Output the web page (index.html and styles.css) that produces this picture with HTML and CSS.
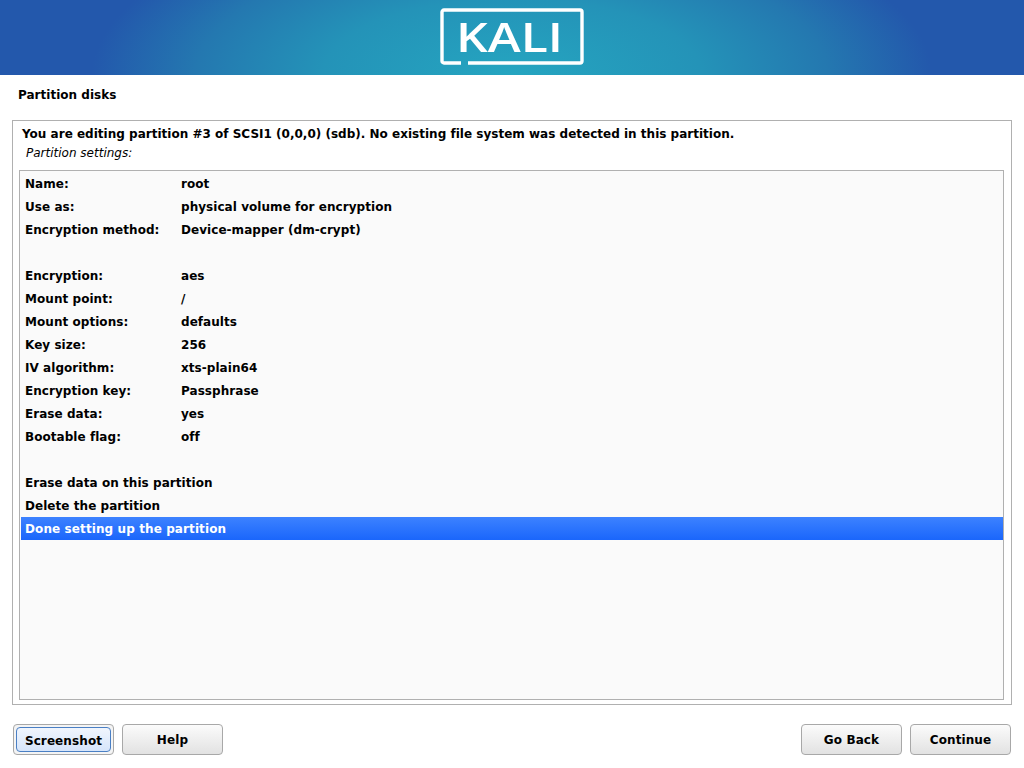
FILE: index.html
```html
<!DOCTYPE html>
<html lang="en">
  <head>
    <meta charset="UTF-8" />
    <title>Partition disks</title>
    <link rel="stylesheet" href="styles.css">
  </head>
  <body>
    <header class="banner">
      <svg class="logo" width="146" height="60" viewBox="0 0 146 60">
        <path d="M22 56H5a2 2 0 0 1-2-2V5a2 2 0 0 1 2-2H141a2 2 0 0 1 2 2V54a2 2 0 0 1-2 2H29" fill="none" stroke="#fff" stroke-width="3.4" />
        <text class="logo-text" x="17" y="45" textLength="107" lengthAdjust="spacingAndGlyphs">KALI</text>
      </svg>
    </header>

    <h1 class="page-title">Partition disks</h1>

    <main class="panel">
      <p class="intro">You are editing partition #3 of SCSI1 (0,0,0) (sdb). No existing file system was detected in this partition.</p>
      <p class="caption">Partition settings:</p>
      <div class="listbox">
        <div class="row"><span>Name:</span><span>root</span></div>
        <div class="row"><span>Use as:</span><span>physical volume for encryption</span></div>
        <div class="row"><span>Encryption method:</span><span>Device-mapper (dm-crypt)</span></div>
        <div class="row"></div>
        <div class="row"><span>Encryption:</span><span>aes</span></div>
        <div class="row"><span>Mount point:</span><span>/</span></div>
        <div class="row"><span>Mount options:</span><span>defaults</span></div>
        <div class="row"><span>Key size:</span><span>256</span></div>
        <div class="row"><span>IV algorithm:</span><span>xts-plain64</span></div>
        <div class="row"><span>Encryption key:</span><span>Passphrase</span></div>
        <div class="row"><span>Erase data:</span><span>yes</span></div>
        <div class="row"><span>Bootable flag:</span><span>off</span></div>
        <div class="row"></div>
        <div class="row"><span class="wide">Erase data on this partition</span></div>
        <div class="row"><span class="wide">Delete the partition</span></div>
        <div class="row selected"><span class="wide">Done setting up the partition</span></div>
      </div>
    </main>

    <footer class="actions">
      <span class="focus-ring"><button class="btn btn-focus">Screenshot</button></span>
      <button class="btn">Help</button>
      <span class="spacer"></span>
      <button class="btn">Go Back</button>
      <button class="btn">Continue</button>
    </footer>
  </body>
</html>
```

FILE: styles.css
```css
html,
body {
  margin: 0;
  height: 768px;
  overflow: hidden;
}

body {
  background: #fff;
  color: #000;
  font-family: "DejaVu Sans", sans-serif;
  font-size: 12px;
  font-weight: bold;
}

.banner {
  height: 75px;
  display: flex;
  justify-content: center;
  background: radial-gradient(ellipse 420px 170px at 50% 100%, #25a5c0 0%, #2493b8 45%, #2478b0 75%, #2358ac 100%);
}

.logo {
  margin-top: 7px;
  filter: blur(0.4px);
}

.logo-text {
  fill: #fff;
  font-family: "Open Sans", sans-serif;
  font-size: 40px;
  font-weight: 560;
}

.page-title {
  margin: 0;
  padding: 12px 18px 0;
  height: 33px;
  font-size: 12px;
  line-height: 17px;
  letter-spacing: 0.02px;
}

.panel {
  margin: 0 12px;
  height: 575px;
  border: 1px solid #b0b0b0;
  padding: 5px 7px 3px 6px;
}

.intro {
  margin: 0 0 0 3px;
  line-height: 17px;
  letter-spacing: 0.01px;
}

.caption {
  margin: 2px 0 0 7px;
  line-height: 17px;
  font-style: italic;
  font-weight: normal;
}

.listbox {
  margin-top: 8px;
  height: 526px;
  border: 1px solid #b0b0b0;
  background: #fafafa;
  padding: 1px 0 1px 1px;
}

.row {
  display: grid;
  grid-template-columns: 156px 1fr;
  height: 23px;
  line-height: 25px;
  padding-left: 4px;
  letter-spacing: 0.05px;
}

.wide {
  grid-column: 1 / -1;
}

.selected {
  background: linear-gradient(#3d82ff, #1a66fb);
  color: #fff;
  letter-spacing: 0.1px;
}

.actions {
  display: flex;
  gap: 8px;
  align-items: center;
  padding: 19px 13px 0;
}

.spacer {
  flex: 1;
}

.btn {
  width: 101px;
  height: 31px;
  padding: 0;
  border: 1px solid #a8a8a8;
  border-radius: 4px;
  background: linear-gradient(#fbfbfb, #e2e2e2);
  color: #000;
  font: bold 12px "DejaVu Sans", sans-serif;
  letter-spacing: 0.1px;
}

.focus-ring {
  display: flex;
  padding: 2px;
  border: 1px solid #a8a8a8;
  border-radius: 4px;
  background: #f4f4f4;
}

.btn-focus {
  width: 95px;
  height: 25px;
  padding-top: 2px;
  border-color: #4a7fc4;
  background: linear-gradient(#f0f5fd, #d6e5fa);
}
```
